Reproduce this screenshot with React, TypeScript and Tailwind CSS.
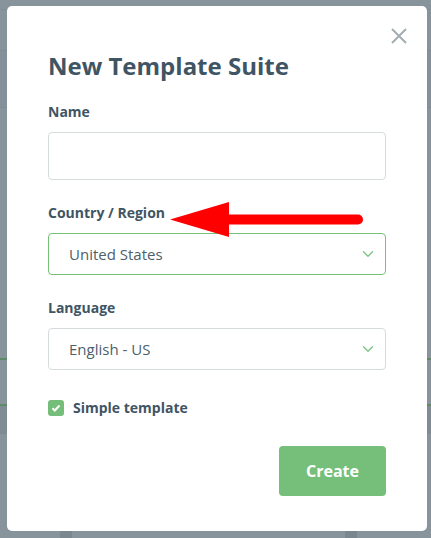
import { ChevronDown } from 'lucide-react'

const font = { fontFamily: '"Open Sans", "Noto Sans", sans-serif' }

function Backdrop() {
  // the page that sits behind the dimmed overlay
  return (
    <div className="absolute inset-0 flex flex-col bg-[#87949b]">
      <div className="h-[10px] border-b border-[#7f8c93]" />
      <div className="h-[40px]" />
      <div className="h-[58px] border-y border-[#7f8c93] bg-[#84919a]" />
      <div className="h-[250px]" />
      <div className="h-[2px] bg-[#5e8a68]" />
      <div className="h-[44px]" />
      <div className="h-[2px] bg-[#5e8a68]" />
      <div className="h-[28px] bg-[#7f8c93]" />
      <div className="flex-1" />
      <div className="flex h-[7px] gap-0">
        <div className="ml-[60px] w-[12px] bg-[#7a878e]" />
        <div className="ml-[273px] w-[12px] bg-[#7a878e]" />
      </div>
    </div>
  )
}

function Select({ value, active }: { value: string; active?: boolean }) {
  return (
    <div
      className={`flex h-[42px] items-center justify-between rounded-[4px] border bg-white pl-[20px] pr-[8px] ${
        active ? 'border-[#74c279]' : 'border-[#d6dbde]'
      }`}
    >
      <span className="text-[15px] text-[#4c5f6c]">{value}</span>
      <ChevronDown size={18} strokeWidth={1.8} className="text-[#7cc683]" />
    </div>
  )
}

export default function App() {
  return (
    <div className="relative h-[538px] w-[431px] overflow-hidden" style={font}>
      <Backdrop />

      <div className="relative ml-[7px] mt-[6px] flex h-[525px] w-[420px] flex-col rounded-[5px] bg-white px-[41px] pt-[44px]">
        <button className="absolute right-[20px] top-[22px] text-[#a3adb3]">
          <svg width="16" height="16" viewBox="0 0 16 16" fill="none" stroke="currentColor" strokeWidth="2">
            <path d="M1 1l14 14M15 1L1 15" />
          </svg>
        </button>

        <h2 className="text-[24px] font-bold leading-[32px] text-[#3f5564]">New Template Suite</h2>

        <label className="mt-[20px] text-[14px] font-bold leading-[20px] text-[#3f5564]">Name</label>
        <input className="mt-[10px] h-[48px] rounded-[4px] border border-[#d6dbde] bg-white px-[12px] outline-none" />

        <label className="mt-[23px] text-[14px] font-bold leading-[20px] text-[#3f5564]">Country / Region</label>
        <div className="mt-[10px]">
          <Select value="United States" active />
        </div>

        <label className="mt-[23px] text-[14px] font-bold leading-[20px] text-[#3f5564]">Language</label>
        <div className="mt-[10px]">
          <Select value="English - US" />
        </div>

        <div className="mt-[27px] flex items-center gap-[9px]">
          <span className="flex h-[16px] w-[16px] items-center justify-center rounded-[3px] bg-[#74be79]">
            <svg width="10" height="10" viewBox="0 0 10 10" fill="none" stroke="white" strokeWidth="2">
              <path d="M1.5 5.2l2.3 2.3L8.5 2.5" />
            </svg>
          </span>
          <span className="text-[14px] font-bold text-[#3f5564]">Simple template</span>
        </div>

        <div className="mt-[28px] flex justify-end">
          <button className="h-[50px] w-[107px] rounded-[4px] bg-[#75bf7a] text-[16px] font-bold text-white">
            Create
          </button>
        </div>
      </div>

      {/* red annotation arrow */}
      <svg className="absolute left-0 top-0" width="431" height="538" viewBox="0 0 431 538">
        <path d="M228 219.5H358" stroke="#ff0000" strokeWidth="10" strokeLinecap="round" />
        <path d="M170 219.5L229 202V237Z" fill="#ff0000" />
      </svg>
    </div>
  )
}
